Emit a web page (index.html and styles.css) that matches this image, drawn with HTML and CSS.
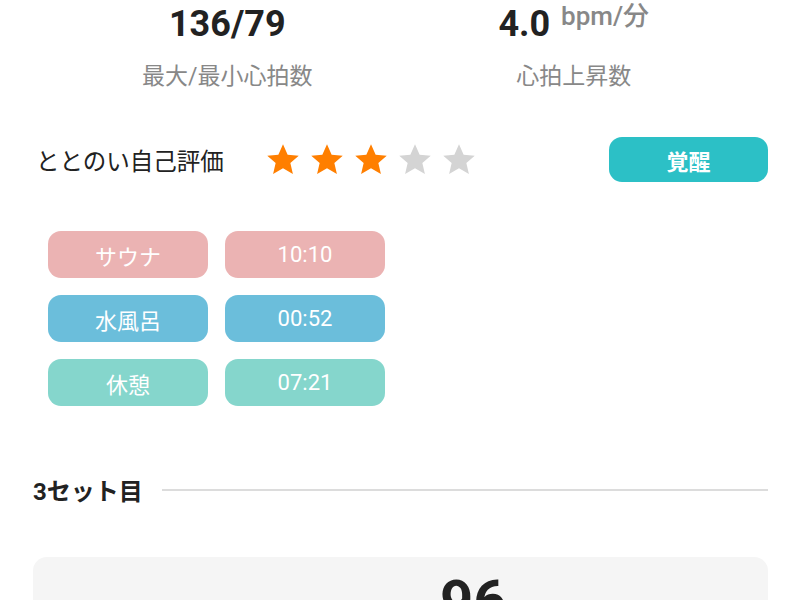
FILE: index.html
```
<!DOCTYPE html>
<html>

<head>
    <link rel="stylesheet" href="styles.css">
</head>

<body>
    <div class="container">
        <div class="stats">
            <div class="stat">
                <div class="value">136/79</div>
                <div class="label">最大/最小心拍数</div>
            </div>
            <div class="stat">
                <div class="value">4.0 <span class="unit">bpm/分</span></div>
                <div class="label">心拍上昇数</div>
            </div>
        </div>

        <div class="rating">
            <span class="rating-title">ととのい自己評価</span>
            <div class="stars">
                <svg class="star on" viewBox="0 0 24 24"><path d="M12 1.5l3.1 7 7.4.6-5.6 4.9 1.7 7.4L12 17.5l-6.6 3.9 1.7-7.4L1.5 9.1l7.4-.6z"/></svg>
                <svg class="star on" viewBox="0 0 24 24"><path d="M12 1.5l3.1 7 7.4.6-5.6 4.9 1.7 7.4L12 17.5l-6.6 3.9 1.7-7.4L1.5 9.1l7.4-.6z"/></svg>
                <svg class="star on" viewBox="0 0 24 24"><path d="M12 1.5l3.1 7 7.4.6-5.6 4.9 1.7 7.4L12 17.5l-6.6 3.9 1.7-7.4L1.5 9.1l7.4-.6z"/></svg>
                <svg class="star" viewBox="0 0 24 24"><path d="M12 1.5l3.1 7 7.4.6-5.6 4.9 1.7 7.4L12 17.5l-6.6 3.9 1.7-7.4L1.5 9.1l7.4-.6z"/></svg>
                <svg class="star" viewBox="0 0 24 24"><path d="M12 1.5l3.1 7 7.4.6-5.6 4.9 1.7 7.4L12 17.5l-6.6 3.9 1.7-7.4L1.5 9.1l7.4-.6z"/></svg>
            </div>
            <button class="mood">覚醒</button>
        </div>

        <div class="phases">
            <div class="pill sauna">サウナ</div>
            <div class="pill sauna">10:10</div>
            <div class="pill water">水風呂</div>
            <div class="pill water">00:52</div>
            <div class="pill rest">休憩</div>
            <div class="pill rest">07:21</div>
        </div>

        <div class="set-title">
            <span>3セット目</span>
            <div class="line"></div>
        </div>

        <div class="card">
            <span class="card-label">ととのい指数</span>
            <span class="card-value">96</span>
        </div>
    </div>
</body>

</html>
```

FILE: styles.css
```
body {
    font-family: Roboto, "Noto Sans CJK JP", sans-serif;
    background-color: #fff;
    margin: 0;
    padding: 0;
    color: #222;
}

div.container {
    padding: 0 32px 0 33px;
}

.stats {
    display: grid;
    grid-template-columns: 1fr 1fr;
    padding: 0 21px;
    text-align: center;
}

.value {
    font-size: 36px;
    font-weight: bold;
    line-height: 44px;
    margin-top: 2px;
}

.unit {
    font-size: 26px;
    font-weight: 500;
    color: #888;
    vertical-align: top;
    line-height: 28px;
    margin-left: 2px;
}

.label {
    font-size: 23px;
    color: #888;
    line-height: 34px;
    margin-top: 14px;
}

.rating {
    display: flex;
    align-items: center;
    margin-top: 43px;
}

.rating-title {
    font-size: 23.5px;
    margin-left: 3px;
    width: 229px;
}

.stars {
    display: flex;
    gap: 8px;
}

.star {
    width: 36px;
    height: 36px;
    fill: #d4d4d4;
}

.star.on {
    fill: #ff7f00;
}

button.mood {
    margin-left: auto;
    width: 159px;
    height: 45px;
    border: none;
    border-radius: 13px;
    background-color: #2cc0c6;
    color: #fff;
    font-family: "Noto Sans CJK JP", sans-serif;
    font-size: 22px;
    font-weight: bold;
}

.phases {
    display: grid;
    grid-template-columns: 160px 160px;
    gap: 17px 17px;
    margin: 49px 0 0 15px;
}

.pill {
    height: 47px;
    border-radius: 13px;
    color: #fff;
    font-size: 22px;
    display: flex;
    align-items: center;
    justify-content: center;
}

.sauna {
    background-color: #ebb3b3;
}

.water {
    background-color: #6bbedb;
}

.rest {
    background-color: #85d6cc;
}

.set-title {
    display: flex;
    align-items: center;
    margin-top: 66px;
    font-size: 24px;
    font-weight: bold;
}

.set-title .line {
    flex: 1;
    height: 2px;
    background-color: #dcdcdc;
    margin-left: 19px;
}

.card {
    margin-top: 50px;
    height: 120px;
    border-radius: 14px;
    background-color: #f5f5f5;
    text-align: center;
    padding-top: 10px;
    box-sizing: border-box;
}

.card-label {
    font-size: 22px;
}

.card-value {
    font-size: 58px;
    font-weight: bold;
    margin-left: 10px;
}
```
